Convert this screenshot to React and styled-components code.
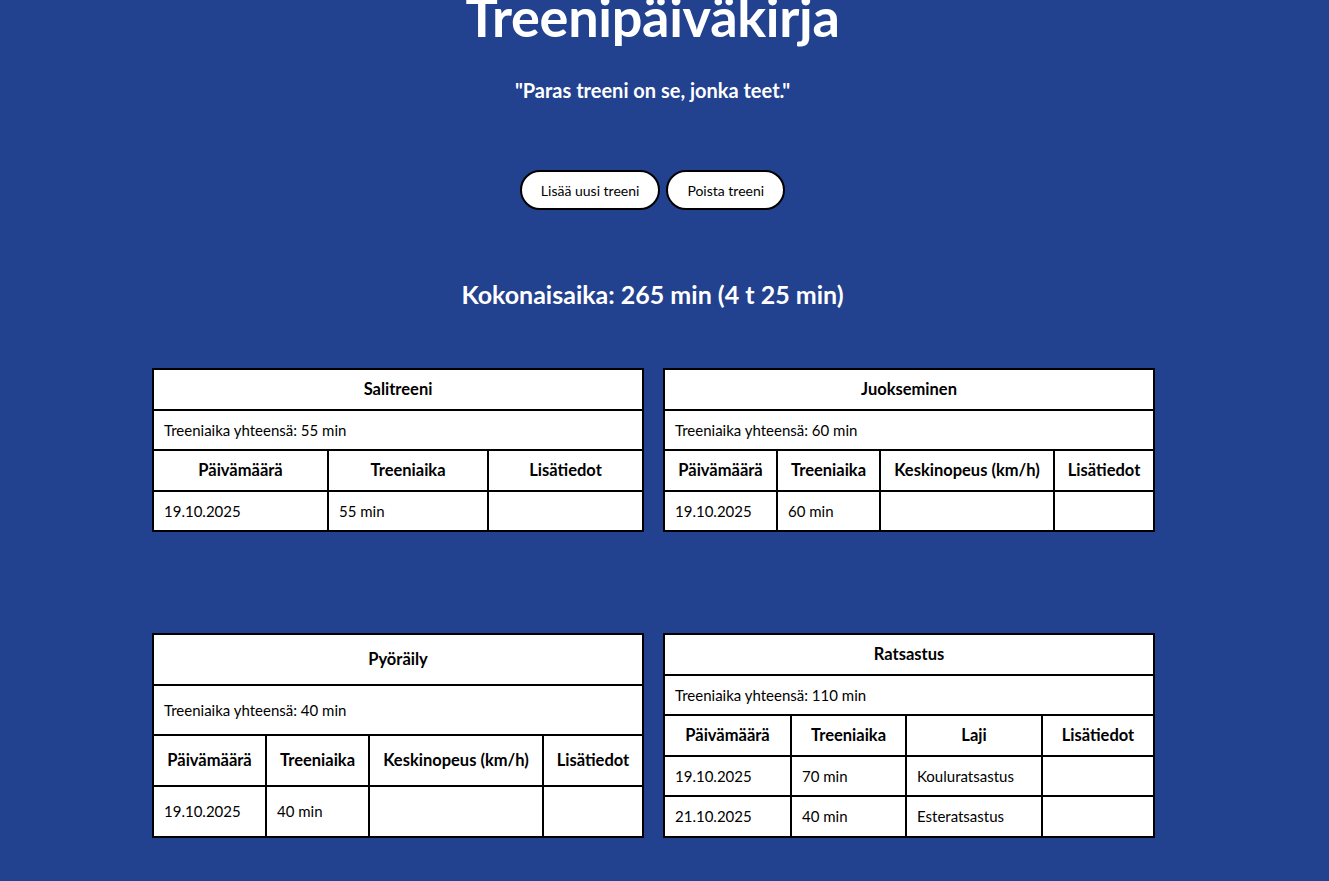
import React from "react";
import styled, { createGlobalStyle } from "styled-components";

const GlobalStyle = createGlobalStyle`
  html, body {
    margin: 0;
    padding: 0;
    background: #22418e;
  }
  body {
    font-family: "Lato", "Open Sans", sans-serif;
    color: #ffffff;
  }
`;

const Page = styled.div`
  display: flex;
  flex-direction: column;
  align-items: center;
  padding-right: 24px;
  padding-bottom: 60px;
`;

const Title = styled.h1`
  font-size: 54px;
  line-height: 52px;
  font-weight: 700;
  margin: -9px 0 0;
  letter-spacing: -0.3px;
`;

const Quote = styled.p`
  font-size: 20px;
  line-height: 22px;
  font-weight: 700;
  margin: 36px 0 0;
`;

const ButtonRow = styled.div`
  display: flex;
  gap: 6px;
  margin-top: 69px;
`;

const PillButton = styled.button`
  height: 40px;
  padding: 0 19px;
  background: #ffffff;
  color: #000000;
  border: 2px solid #000000;
  border-radius: 20px;
  font-family: "Lato", sans-serif;
  font-size: 14px;
  cursor: pointer;
`;

const Total = styled.h2`
  font-size: 25px;
  line-height: 30px;
  font-weight: 700;
  margin: 69px 0 0;
`;

const Grid = styled.div`
  display: grid;
  grid-template-columns: 490px 490px;
  column-gap: 21px;
  row-gap: 101px;
  margin-top: 59px;
`;

const Table = styled.table`
  width: 490px;
  height: 100%;
  border-collapse: collapse;
  table-layout: fixed;
  background: #ffffff;
  color: #000000;
  font-size: 15px;
`;

const Col = styled.col`
  width: ${(p) => p.$w}px;
`;

const HeadCell = styled.th`
  border: 2px solid #000000;
  padding: 10px 4px 9.5px;
  line-height: 19px;
  font-size: 16.5px;
  font-weight: 700;
  text-align: center;
  white-space: nowrap;
`;

const Cell = styled.td`
  border: 2px solid #000000;
  padding: 10px 10px 9.5px;
  line-height: 19px;
  text-align: left;
  white-space: nowrap;
`;

const workouts = [
  {
    name: "Salitreeni",
    total: "55 min",
    cols: [175, 160, 155],
    headers: ["Päivämäärä", "Treeniaika", "Lisätiedot"],
    rows: [["19.10.2025", "55 min", ""]],
  },
  {
    name: "Juokseminen",
    total: "60 min",
    cols: [113, 103, 174, 100],
    headers: ["Päivämäärä", "Treeniaika", "Keskinopeus (km/h)", "Lisätiedot"],
    rows: [["19.10.2025", "60 min", "", ""]],
  },
  {
    name: "Pyöräily",
    total: "40 min",
    cols: [113, 103, 174, 100],
    headers: ["Päivämäärä", "Treeniaika", "Keskinopeus (km/h)", "Lisätiedot"],
    rows: [["19.10.2025", "40 min", "", ""]],
  },
  {
    name: "Ratsastus",
    total: "110 min",
    cols: [127, 115, 136, 112],
    headers: ["Päivämäärä", "Treeniaika", "Laji", "Lisätiedot"],
    rows: [
      ["19.10.2025", "70 min", "Kouluratsastus", ""],
      ["21.10.2025", "40 min", "Esteratsastus", ""],
    ],
  },
];

function WorkoutTable({ w }) {
  const n = w.headers.length;
  return (
    <Table>
      <colgroup>
        {w.cols.map((c, i) => (
          <Col key={i} $w={c} />
        ))}
      </colgroup>
      <tbody>
        <tr>
          <HeadCell colSpan={n}>{w.name}</HeadCell>
        </tr>
        <tr>
          <Cell colSpan={n}>Treeniaika yhteensä: {w.total}</Cell>
        </tr>
        <tr>
          {w.headers.map((h) => (
            <HeadCell key={h}>{h}</HeadCell>
          ))}
        </tr>
        {w.rows.map((r, i) => (
          <tr key={i}>
            {r.map((c, j) => (
              <Cell key={j}>{c}</Cell>
            ))}
          </tr>
        ))}
      </tbody>
    </Table>
  );
}

export default function App() {
  return (
    <>
      <GlobalStyle />
      <Page>
        <Title>Treenipäiväkirja</Title>
        <Quote>"Paras treeni on se, jonka teet."</Quote>
        <ButtonRow>
          <PillButton>Lisää uusi treeni</PillButton>
          <PillButton>Poista treeni</PillButton>
        </ButtonRow>
        <Total>Kokonaisaika: 265 min (4 t 25 min)</Total>
        <Grid>
          {workouts.map((w) => (
            <WorkoutTable key={w.name} w={w} />
          ))}
        </Grid>
      </Page>
    </>
  );
}
